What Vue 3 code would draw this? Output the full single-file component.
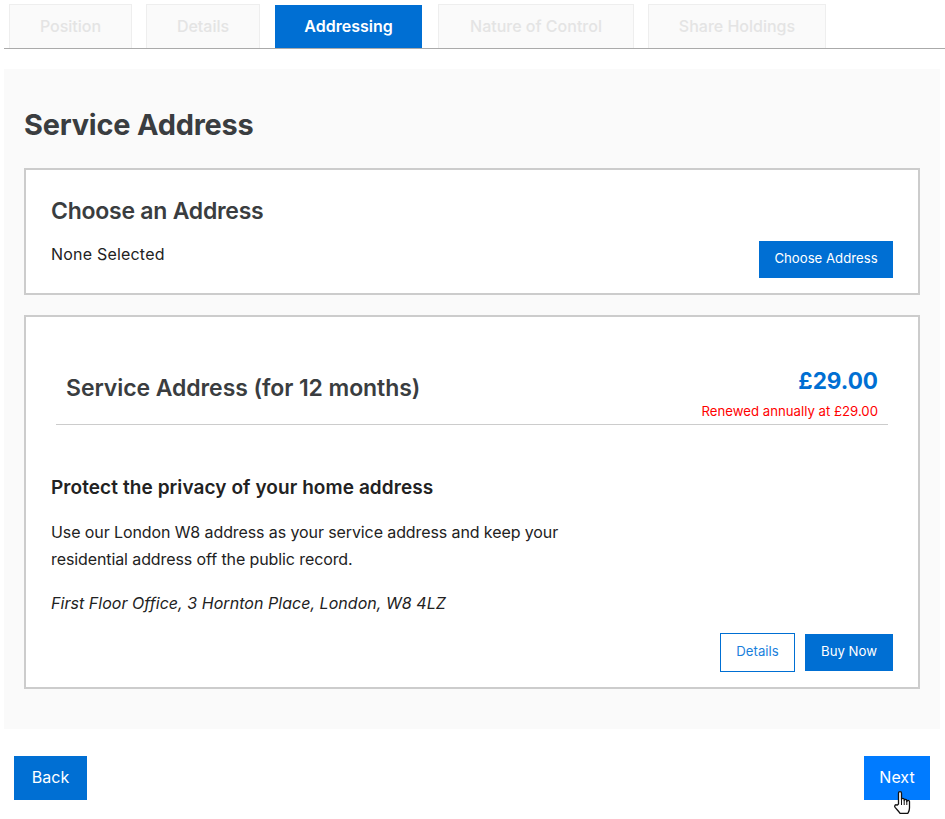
<template>
  <div class="page">
    <nav class="tabs">
      <a v-for="t in tabs" :key="t.label" class="tab" :class="{ active: t.active }" :style="{ width: t.w + 'px' }">{{ t.label }}</a>
    </nav>
    <main class="panel">
      <h1>Service Address</h1>
      <section class="card choose">
        <h2>Choose an Address</h2>
        <div class="choose-row">
          <span class="none">None Selected</span>
          <button class="btn small">Choose Address</button>
        </div>
      </section>
      <section class="card product">
        <header class="product-head">
          <h2>Service Address (for 12 months)</h2>
          <div class="price">
            <strong>£29.00</strong>
            <small>Renewed annually at £29.00</small>
          </div>
        </header>
        <h3>Protect the privacy of your home address</h3>
        <p class="desc">Use our London W8 address as your service address and keep your residential address off the public record.</p>
        <p class="addr">First Floor Office, 3 Hornton Place, London, W8 4LZ</p>
        <div class="actions">
          <button class="btn small outline">Details</button>
          <button class="btn small">Buy Now</button>
        </div>
      </section>
    </main>
    <footer class="nav">
      <button class="btn big back">Back</button>
      <button class="btn big next">
        Next
        <svg class="cursor" width="19" height="26" viewBox="0 0 18 26">
          <path d="M5 14V3.2C5 1 8 1 8 3.2V9.5c0-1.6 2.7-1.6 2.7 0v1c0-1.5 2.6-1.5 2.6 0v1c0-1.4 2.7-1.4 2.7 0v6.5c0 2.5-.7 3.6-1.6 5.3H6.6C5 21 3.4 19.6 1.6 17.4.4 15.8 2 14 3.6 15.2Z" fill="#fff" stroke="#111" stroke-width="1.3" stroke-linejoin="round"/>
          <path d="M8 10v5M10.7 10.5v4.5M13.3 11v4" stroke="#111" stroke-width="1" fill="none"/>
        </svg>
      </button>
    </footer>
  </div>
</template>

<script setup>
const tabs = [
  { label: 'Position', w: 123 },
  { label: 'Details', w: 114 },
  { label: 'Addressing', w: 149, active: true },
  { label: 'Nature of Control', w: 196 },
  { label: 'Share Holdings', w: 178 }
]
</script>

<style>
html, body { margin: 0; background: #fff; }
</style>

<style scoped>
.page {
  width: 945px;
  height: 819px;
  overflow: hidden;
  font-family: Inter, "Liberation Sans", sans-serif;
  color: #212529;
  box-sizing: border-box;
  padding: 4px 0 0 4px;
}
.tabs {
  display: flex;
  height: 45px;
  box-sizing: border-box;
  border-bottom: 1px solid #aaa;
  padding-left: 5px;
  gap: 14px;
}
.tab {
  box-sizing: border-box;
  height: 44px;
  padding-bottom: 2px;
  display: flex;
  align-items: center;
  justify-content: center;
  background: #fafafa;
  border: 1px solid #eee;
  border-bottom: 0;
  color: #e4e4e4;
  font-size: 16px;
  font-weight: 500;
}
.tab.active {
  background: #006fd3;
  border-color: #fff;
  color: #fff;
  font-weight: 600;
  margin-right: 1px;
}
.panel {
  width: 936px;
  height: 660px;
  margin-top: 20px;
  background: #fafafa;
  box-sizing: border-box;
  padding: 36px 20px 0;
}
h1 {
  margin: 0 0 23px;
  font-size: 28.9px;
  line-height: 40px;
  font-weight: 700;
  color: #3a3d40;
  letter-spacing: -0.2px;
}
.card {
  background: #fff;
  border: 2px solid #ccc;
  box-sizing: border-box;
  padding: 0 25px;
  width: 896px;
}
.choose { height: 127px; margin-bottom: 20px; padding-top: 26px; }
h2 {
  margin: 0;
  font-size: 23px;
  line-height: 30px;
  font-weight: 600;
  color: #3a3d40;
  letter-spacing: -0.25px;
}
.choose-row {
  display: flex;
  justify-content: space-between;
  align-items: flex-start;
  margin-top: 14px;
}
.none { font-size: 16px; line-height: 28px; color: #222; letter-spacing: 0.2px; }
.btn {
  border: 0;
  background: #006fd3;
  color: #fff;
  font-family: inherit;
  padding: 0 0 2px;
  display: inline-flex;
  align-items: center;
  justify-content: center;
}
.btn.small {
  height: 37px;
  width: 134px;
  padding-bottom: 4px;
  font-size: 13.2px;
  font-weight: 400;
  margin-top: 1px;
}
.product { height: 374px; position: relative; }
.product-head {
  margin: 0 5px;
  height: 108px;
  box-sizing: border-box;
  padding: 40px 10px 0;
  display: flex;
  justify-content: space-between;
  border-bottom: 1px solid #ccc;
}
.product-head h2 { margin-top: 16px; letter-spacing: -0.08px; }
.price { display: flex; flex-direction: column; align-items: flex-end; margin-top: 8px; }
.price strong { font-size: 22.5px; line-height: 32px; font-weight: 700; color: #006fd3; }
.price small { font-size: 13.2px; line-height: 18px; margin-top: 5px; color: #f00; }
h3 {
  margin: 49px 0 0;
  font-size: 19px;
  line-height: 28px;
  font-weight: 600;
  color: #222;
  letter-spacing: 0.08px;
}
.desc {
  margin: 17px 0 0;
  width: 530px;
  font-size: 16px;
  line-height: 27px;
  color: #222;
  letter-spacing: -0.1px;
}
.addr {
  margin: 17px 0 0;
  font-size: 16px;
  line-height: 27px;
  font-style: italic;
  color: #222;
  letter-spacing: 0.04px;
}
.actions {
  position: absolute;
  right: 25px;
  top: 316px;
  display: flex;
  gap: 10px;
  align-items: center;
}
.actions .btn.small { margin: 0; width: 88px; }
.actions .btn.outline {
  width: 75px;
  height: 39px;
  background: #fff;
  color: #1a7fdc;
  border: 1px solid #006fd3;
  box-sizing: border-box;
}
.nav {
  display: flex;
  justify-content: space-between;
  padding: 27px 15px 0 10px;
}
.btn.big { height: 44px; font-size: 16px; position: relative; }
.back { width: 73px; }
.btn.next { width: 66px; background: #007bff; }
.cursor { position: absolute; left: 29px; top: 34px; }
</style>
